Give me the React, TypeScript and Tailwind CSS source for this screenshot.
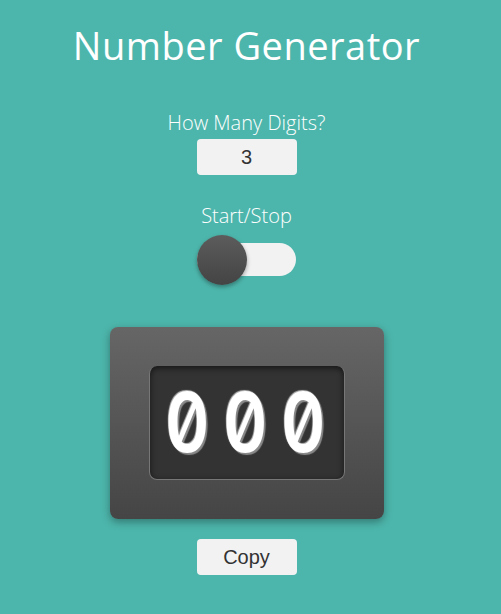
export default function App() {
  return (
    <div className="min-h-[614px] w-full bg-[#4db6ac] flex flex-col items-center text-white" style={{ fontFamily: '"Open Sans", sans-serif' }}>
      <h1 className="mt-[19px] text-[38px] leading-[52px] font-normal tracking-[0.5px] -ml-[8px]">Number Generator</h1>
      <div className="mt-[39px] text-[20px] leading-[26px] font-light -ml-[8px]">How Many Digits?</div>
      <input
        readOnly
        value="3"
        className="mt-[3px] w-[100px] h-[36px] rounded-[4px] bg-[#f2f2f2] text-center text-[20px] text-[#333] outline-none -ml-[8px]"
        style={{ fontFamily: '"Liberation Sans", Arial, sans-serif' }}
      />
      <div className="mt-[28px] text-[20px] leading-[26px] font-light -ml-[8px]">Start/Stop</div>
      <div className="relative mt-[14px] w-[99px] h-[33px] rounded-full bg-[#f2f2f2] -ml-[8px]">
        <div className="absolute left-0 top-[-8px] w-[50px] h-[50px] rounded-full bg-gradient-to-b from-[#5c5c5c] to-[#444] shadow-[0_2px_4px_rgba(0,0,0,0.35)]" />
      </div>
      <div className="mt-[51px] w-[274px] h-[192px] rounded-[8px] bg-gradient-to-b from-[#666] to-[#454545] shadow-[0_3px_8px_rgba(0,0,0,0.35)] flex items-center justify-center -ml-[8px]">
        <div className="w-[196px] h-[114px] rounded-[8px] bg-[#333] border-b border-x border-[#777] shadow-[inset_0_2px_6px_rgba(0,0,0,0.6)] flex items-center justify-center gap-[19px] pr-[14px]">
          {["0", "0", "0"].map((d, i) => (
            <span
              key={i}
              className="inline-block w-[39px] text-center text-[82px] leading-none font-semibold text-white scale-x-[0.84] [text-shadow:2px_2px_1px_#8a8a8a,-1px_-1px_1px_#bbb]"
              style={{ fontFamily: 'Inter, sans-serif', fontFeatureSettings: '"zero" 1, "tnum" 1' }}
            >
              {d}
            </span>
          ))}
        </div>
      </div>
      <button
        className="mt-[20px] w-[100px] h-[36px] rounded-[4px] bg-[#f2f2f2] text-[20px] text-[#333] -ml-[8px]"
        style={{ fontFamily: '"Liberation Sans", Arial, sans-serif' }}
      >
        Copy
      </button>
    </div>
  );
}
